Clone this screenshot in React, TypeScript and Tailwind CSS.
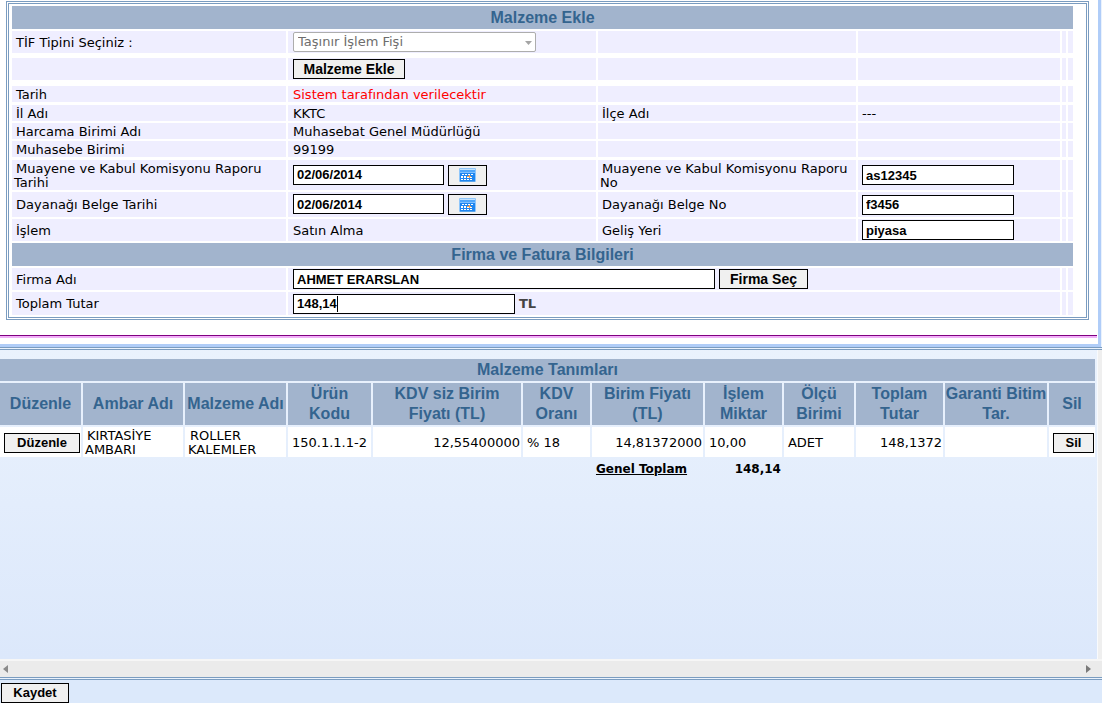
import { useState } from "react";
import type { ReactNode } from "react";

const font = "font-[Verdana,'DejaVu_Sans',sans-serif]";
const arial = "font-['Liberation_Sans',Arial,sans-serif]";
const cell = "border-r-2 border-transparent bg-[#efeeff] bg-clip-padding";
const input = `block h-5 border border-black bg-white px-[3px] text-[13px] font-bold text-black outline-none ${arial}`;
const button = `block h-5 shrink-0 border border-black bg-[#f0f0f0] text-center font-bold leading-[18px] text-black ${arial}`;
const head = `border-r-2 border-b-2 border-transparent bg-[#a2b4cd] bg-clip-padding text-center text-base font-bold leading-5 text-[#34648f] ${arial}`;

const CalendarIcon = () => (
  <svg width="17" height="14" viewBox="0 0 17 14" className="mx-auto block">
    <rect width="17" height="14" rx="1" fill="#8fc6fb" />
    <rect x="1" y="1" width="15" height="1" fill="#c3e2ff" />
    <rect x="1" y="2" width="15" height="2" fill="#4fa6fa" />
    <rect x="1" y="4" width="15" height="1" fill="#7fc0ff" />
    <rect x="1" y="5" width="15" height="8" fill="#1f86f0" />
    <path
      d="M3 6h2v1H3zM6 6h2v1H6zM9 6h2v1H9zM12 6h2v1h-2zM2 8h2v2H2zM5 8h2v2H5zM8 9h2v1H8zM11 9h2v1h-2zM2 11h2v1H2zM5 11h2v1H5zM8 11h2v1H8zM11 11h2v1h-2z"
      fill="#fff"
    />
    <path d="M8 8h4v1H8zM10 7h1v3h-1z" fill="#f5a04e" />
    <rect x="1" y="13" width="15" height="1" fill="#5aa5ec" />
  </svg>
);

type RowProps = {
  size: string;
  label?: ReactNode;
  value?: ReactNode;
  label2?: ReactNode;
  value2?: ReactNode;
  wide?: boolean;
};

const Row = ({ size, label, value, label2, value2, wide }: RowProps) => (
  <tr>
    <td className={`${cell} ${size} pt-px pl-0.5 indent-0.5`}>{label}</td>
    <td className={`${cell} ${size} pl-[5px] ${typeof value === "string" ? "pt-px" : ""}`} colSpan={wide ? 3 : 1}>
      {value}
    </td>
    {!wide && (
      <>
        <td className={`${cell} ${size} pt-px pl-0.5 indent-0.5`}>{label2}</td>
        <td className={`${cell} ${size} pl-1 ${typeof value2 === "string" ? "pt-px" : ""}`}>{value2}</td>
      </>
    )}
    <td className={`${cell} ${size}`} />
    <td className={`${cell} ${size}`} />
  </tr>
);

const DateField = ({ id, value, onChange }: { id: string; value: string; onChange: (v: string) => void }) => (
  <div className="flex items-start gap-1">
    <input id={id} className={`${input} w-[151px]`} value={value} onChange={(e) => onChange(e.target.value)} />
    <button type="button" aria-label="Takvim" className="h-[21px] w-[39px] border border-black bg-[#f0f0f0]">
      <CalendarIcon />
    </button>
  </div>
);

const columns = [
  { title: "Düzenle", width: "w-[83px]" },
  { title: "Ambar Adı", width: "w-[102px]" },
  { title: "Malzeme Adı", width: "w-[103px]" },
  { title: "Ürün Kodu", width: "w-[85px]", pad: "px-2" },
  { title: "KDV siz Birim Fiyatı (TL)", width: "" },
  { title: "KDV Oranı", width: "w-[69px]" },
  { title: "Birim Fiyatı (TL)", width: "w-[113px]" },
  { title: "İşlem Miktar", width: "w-[79px]" },
  { title: "Ölçü Birimi", width: "w-[72px]" },
  { title: "Toplam Tutar", width: "w-[89px]" },
  { title: "Garanti Bitim Tar.", width: "w-[104px]" },
  { title: "Sil", width: "w-[48px]" },
];

const item = "h-8 border-r-2 border-b-2 border-transparent bg-white bg-clip-padding pt-px";

export default function App() {
  const [form, setForm] = useState({
    raporTarihi: "02/06/2014",
    belgeTarihi: "02/06/2014",
    raporNo: "as12345",
    belgeNo: "f3456",
    gelisYeri: "piyasa",
    firma: "AHMET ERARSLAN",
    tutar: "148,14",
  });
  const set = (key: keyof typeof form) => (value: string) => setForm({ ...form, [key]: value });

  return (
    <div className={`flex min-h-screen flex-col bg-[#eaf2fd] text-[13px] leading-[14px] text-black ${font}`}>
      <section className="mr-px border-r-3 border-b-3 border-[#b0cdf8] bg-white pt-px pb-1.5">
        <div className="mr-[9px] ml-1.5 border-3 border-double border-[#7a9cc0] pt-0.5 pr-[11px] pl-[3px]">
          <table className="w-full table-fixed border-separate border-spacing-0">
            <colgroup>
              <col className="w-[276px]" />
              <col className="w-[310px]" />
              <col className="w-[260px]" />
              <col />
              <col className="w-1.5" />
              <col className="w-[7px]" />
            </colgroup>
            <tbody>
              <tr>
                <th colSpan={6} className={`${head} h-[25px]`}>
                  Malzeme Ekle
                </th>
              </tr>
              <Row
                size="h-[27px] border-b-5"
                label={<label htmlFor="tif">TİF Tipini Seçiniz :</label>}
                value={
                  <div className="relative w-[243px]">
                    <select
                      id="tif"
                      disabled
                      className="block h-5 w-full appearance-none rounded-xs border border-[#adadad] bg-white pl-1 text-[13px] leading-4 text-[#6d6d6d] opacity-100"
                    >
                      <option>Taşınır İşlem Fişi</option>
                    </select>
                    <svg width="7" height="4" viewBox="0 0 7 4" className="absolute top-[9px] right-1">
                      <path d="M0 0h7L3.500 4z" fill="#a5a5a5" />
                    </svg>
                  </div>
                }
              />
              <Row
                size="h-7 border-b-6"
                value={
                  <button type="button" className={`${button} w-28 text-sm leading-[18px]`}>
                    Malzeme Ekle
                  </button>
                }
              />
              <Row
                size="h-[19px] border-b-3 text-[#ff0000] first:text-black"
                label="Tarih"
                value="Sistem tarafından verilecektir"
              />
              <Row size="h-[18px] border-b-2" label="İl Adı" value="KKTC" label2="İlçe Adı" value2="---" />
              <Row size="h-[18px] border-b-2" label="Harcama Birimi Adı" value="Muhasebat Genel Müdürlüğü" />
              <Row size="h-[19px] border-b-3" label="Muhasebe Birimi" value="99199" />
              <Row
                size="h-8 border-b-2"
                label={<label htmlFor="raporTarihi">Muayene ve Kabul Komisyonu Raporu Tarihi</label>}
                value={<DateField id="raporTarihi" value={form.raporTarihi} onChange={set("raporTarihi")} />}
                label2={<label htmlFor="raporNo">Muayene ve Kabul Komisyonu Raporu No</label>}
                value2={
                  <input
                    id="raporNo"
                    className={`${input} w-[152px]`}
                    value={form.raporNo}
                    onChange={(e) => set("raporNo")(e.target.value)}
                  />
                }
              />
              <Row
                size="h-[27px] border-b-2"
                label={<label htmlFor="belgeTarihi">Dayanağı Belge Tarihi</label>}
                value={<DateField id="belgeTarihi" value={form.belgeTarihi} onChange={set("belgeTarihi")} />}
                label2={<label htmlFor="belgeNo">Dayanağı Belge No</label>}
                value2={
                  <input
                    id="belgeNo"
                    className={`${input} w-[152px]`}
                    value={form.belgeNo}
                    onChange={(e) => set("belgeNo")(e.target.value)}
                  />
                }
              />
              <Row
                size="h-6 border-b-2"
                label="İşlem"
                value="Satın Alma"
                label2={<label htmlFor="gelisYeri">Geliş Yeri</label>}
                value2={
                  <input
                    id="gelisYeri"
                    className={`${input} w-[152px]`}
                    value={form.gelisYeri}
                    onChange={(e) => set("gelisYeri")(e.target.value)}
                  />
                }
              />
              <tr>
                <th colSpan={6} className={`${head} h-[25px]`}>
                  Firma ve Fatura Bilgileri
                </th>
              </tr>
              <Row
                wide
                size="h-6 border-b-2"
                label={<label htmlFor="firma">Firma Adı</label>}
                value={
                  <div className="flex items-center gap-1">
                    <input
                      id="firma"
                      className={`${input} w-[422px]`}
                      value={form.firma}
                      onChange={(e) => set("firma")(e.target.value)}
                    />
                    <button type="button" className={`${button} w-[89px] text-sm leading-[18px]`}>
                      Firma Seç
                    </button>
                  </div>
                }
              />
              <Row
                wide
                size="h-[25px] border-b-2"
                label={<label htmlFor="tutar">Toplam Tutar</label>}
                value={
                  <div className="relative flex items-center gap-1">
                    <input
                      id="tutar"
                      className={`${input} w-[222px]`}
                      value={form.tutar}
                      onChange={(e) => set("tutar")(e.target.value)}
                    />
                    <span className="absolute top-0.5 left-11 h-4 w-px bg-black" />
                    <b className="text-[#444]">TL</b>
                  </div>
                }
              />
            </tbody>
          </table>
        </div>
        <div className="mt-[15px] mr-px h-[3px] border-t border-[#800080] bg-[#f0b0f8]" />
      </section>

      <div className="h-[3px] border-y border-[#7a9cc0]" />

      <section className="flex grow">
        <div className="grow bg-linear-to-b from-[#eaf2fd] to-[#dce8fb] pt-[9px]">
          <table className="w-full table-fixed border-separate border-spacing-0">
            <colgroup>
              {columns.map((c) => (
                <col key={c.title} className={c.width} />
              ))}
            </colgroup>
            <thead>
              <tr>
                <th colSpan={12} className={`${head} h-6`}>
                  Malzeme Tanımları
                </th>
              </tr>
              <tr>
                {columns.map((c) => (
                  <th key={c.title} className={`${head} h-11 ${c.pad ?? ""}`}>
                    {c.title}
                  </th>
                ))}
              </tr>
            </thead>
            <tbody>
              <tr>
                <td className={`${item} pl-1`}>
                  <button type="button" className={`${button} w-[76px]`}>
                    Düzenle
                  </button>
                </td>
                <td className={`${item} pl-0.5 indent-0.5`}>KIRTASİYE AMBARI</td>
                <td className={`${item} pl-[3px] indent-0.5`}>ROLLER KALEMLER</td>
                <td className={`${item} pl-1 whitespace-nowrap`}>150.1.1.1-2</td>
                <td className={`${item} pr-px text-right`}>12,55400000</td>
                <td className={`${item} pl-1`}>% 18</td>
                <td className={`${item} pr-px text-right`}>14,81372000</td>
                <td className={`${item} pl-1`}>10,00</td>
                <td className={`${item} pl-1`}>ADET</td>
                <td className={`${item} pr-px text-right`}>148,1372</td>
                <td className={item} />
                <td className={`${item} pl-1`}>
                  <button type="button" className={`${button} w-[41px]`}>
                    Sil
                  </button>
                </td>
              </tr>
              <tr className="text-xs leading-5 font-bold">
                <td colSpan={6} />
                <td className="pl-1 whitespace-nowrap underline">Genel Toplam</td>
                <td className="pr-[3px] text-right">148,14</td>
                <td colSpan={4} />
              </tr>
            </tbody>
          </table>
        </div>
        <div className="w-[5px] shrink-0 border-l border-[#f8fafd] bg-[#efefef]" />
      </section>

      <div className="flex h-[18px] items-center justify-between border-t-2 border-[#f6f6f6] bg-[#ebebeb] pr-[11px] pl-[3px]">
        <svg width="5" height="8" viewBox="0 0 5 8">
          <path d="M5 0v8L0 4z" fill="#8a8a8a" />
        </svg>
        <svg width="5" height="8" viewBox="0 0 5 8">
          <path d="M0 0v8l5-4z" fill="#7a7a7a" />
        </svg>
      </div>
      <div className="h-[3px] border-y border-[#7a9cc0]" />
      <footer className="bg-[#dce9fb] pt-[3px] pl-px">
        <button type="button" className={`${button} w-[68px]`}>
          Kaydet
        </button>
      </footer>
    </div>
  );
}
